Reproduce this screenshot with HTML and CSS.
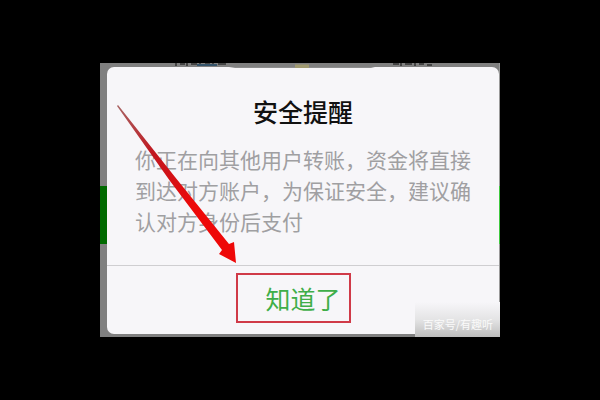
FILE: index.html
```html
<!DOCTYPE html>
<html lang="zh-CN">
<head>
    <meta charset="UTF-8">
    <meta name="viewport" content="width=device-width, initial-scale=1.0">
    <title>安全提醒</title>
    <link rel="stylesheet" href="styles.css">
</head>
<body>
    <main class="screen">
        <svg class="backdrop-marks" viewBox="0 0 400 6" aria-hidden="true">
            <path d="M76 0v3M80 1h5M87 0v3M91 1h6M100 0v3M105 1h5M113 0v2M118 1h8" stroke="#444" stroke-width="2"/>
            <path d="M97 2h20" stroke="#35546b" stroke-width="2"/>
            <path d="M195 3h14" stroke="#a09a70" stroke-width="3"/>
            <path d="M293 1h6M301 0v3M305 1h7M315 0v3M319 1h5M327 2h5" stroke="#444" stroke-width="2"/>
        </svg>

        <section class="dialog" role="dialog" aria-labelledby="dialogTitle">
            <svg class="backdrop-marks" viewBox="0 0 392 6" aria-hidden="true">
                <path d="M122 0h146l-4 1H128Z" fill="#8e8e8e"/>
                <path d="M188 0h14v1h-14Z" fill="#a09a70"/>
            </svg>
            <div class="dialog-body">
                <h1 id="dialogTitle">安全提醒</h1>
                <p>你正在向其他用户转账，资金将直接到达对方账户，为保证安全，建议确认对方身份后支付</p>
            </div>
            <div class="dialog-footer">
                <button class="confirm-btn" type="button">知道了</button>
            </div>
        </section>

        <!-- Arrow pointing at the confirm button -->
        <svg class="arrow" viewBox="0 0 122 162" aria-hidden="true">
            <defs>
                <linearGradient id="arrowFill" x1="0" y1="0" x2="1" y2="1">
                    <stop offset="0" stop-color="#a86464"/>
                    <stop offset="0.3" stop-color="#c01820"/>
                    <stop offset="0.65" stop-color="#ee0808"/>
                    <stop offset="1" stop-color="#ee0808"/>
                </linearGradient>
            </defs>
            <path d="M0 1L1 0L58 72L112 139L117 137L119 158L102 149L105 145L53 76Z" fill="url(#arrowFill)"/>
        </svg>

        <div class="watermark">百家号/有趣听</div>
    </main>
</body>
</html>
```

FILE: styles.css
```css
* {
    box-sizing: border-box;
}

body {
    margin: 0;
    min-height: 100vh;
    background: #000;
    font-family: "Noto Sans CJK SC", sans-serif;
    display: flex;
    justify-content: center;
    align-items: center;
}

.screen {
    position: relative;
    width: 67%;
    max-width: 400px;
    padding: 4px 1px 3px 7px;
    background:
        linear-gradient(to bottom, #9a9a9a 45%, #3fc83f 45%, #3fc83f 66%, #9a9a9a 66%) right / 1px 100% no-repeat,
        linear-gradient(to bottom, #808080 45%, #006a00 45%, #006a00 66%, #808080 66%);
}

.backdrop-marks {
    position: absolute;
    top: 0;
    left: 0;
    width: 100%;
}

.dialog {
    position: relative;
    background: #f7f6f9;
    border-radius: 7px;
}

.dialog-body {
    padding: 25px 28px 28px;
    border-bottom: 1px solid #cfced1;
}

.dialog-body h1 {
    margin: 0 0 14px;
    font-size: 25px;
    line-height: 38px;
    font-weight: 500;
    color: #111;
    text-align: center;
}

.dialog-body p {
    margin: 0;
    font-size: 21px;
    line-height: 31px;
    font-weight: 400;
    color: #a09fa2;
}

.dialog-footer {
    display: flex;
    justify-content: center;
    padding: 7px 20px 11px 0;
}

.confirm-btn {
    width: 115px;
    height: 50px;
    padding: 0 0 0 20px;
    border: 2px solid #d03a48;
    background: transparent;
    font-family: inherit;
    font-size: 25px;
    color: #3fae49;
    cursor: pointer;
}

.arrow {
    position: absolute;
    top: 42px;
    left: 17px;
    width: 122px;
    height: 162px;
    pointer-events: none;
}

.watermark {
    position: absolute;
    right: 0;
    bottom: 0;
    padding: 14px 7px 4px 8px;
    background: linear-gradient(to bottom, #f7f6f9, #e4e4e5 50%, #bdbdbd);
    font-size: 11px;
    line-height: 17px;
    color: #fafafa;
}
```
